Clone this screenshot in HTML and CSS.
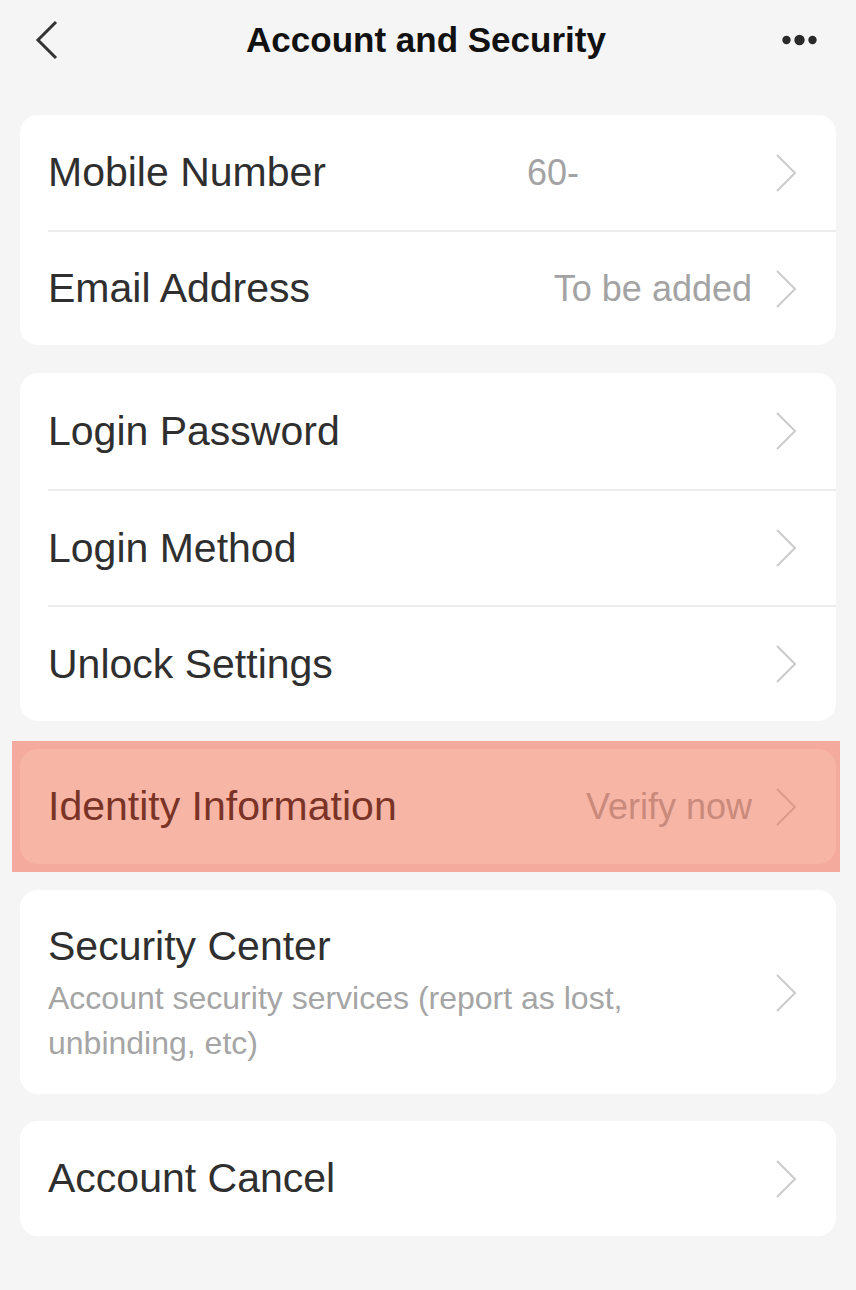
FILE: index.html
```html
<!DOCTYPE html>
<html lang="en">
<head>
<meta charset="utf-8">
<title>Account and Security</title>
<link rel="stylesheet" href="styles.css">
</head>
<body>
<header class="topbar">
  <div class="topbar-left">
    <svg class="back" width="26" height="40" viewBox="0 0 26 40"><polyline points="22,2 4,20 22,38" fill="none" stroke="#333" stroke-width="3" stroke-linejoin="miter"/></svg>
  </div>
  <h1 class="title">Account and Security</h1>
  <div class="topbar-right">
    <svg class="more" width="36" height="14" viewBox="0 0 36 14"><circle cx="4.5" cy="7" r="4.2" fill="#2a2a2a"/><circle cx="17.5" cy="7" r="5.2" fill="#2a2a2a"/><circle cx="30.5" cy="7" r="4.2" fill="#2a2a2a"/></svg>
  </div>
</header>

<main class="content">
  <section class="card">
    <div class="row">
      <span class="label">Mobile Number</span>
      <span class="value value-phone">60-</span>
      <svg class="chev" width="24" height="40" viewBox="0 0 24 40"><polyline points="3,2 21,20 3,38" fill="none" stroke="#cbcbcb" stroke-width="2"/></svg>
    </div>
    <div class="row">
      <span class="label">Email Address</span>
      <span class="value">To be added</span>
      <svg class="chev" width="24" height="40" viewBox="0 0 24 40"><polyline points="3,2 21,20 3,38" fill="none" stroke="#cbcbcb" stroke-width="2"/></svg>
    </div>
  </section>

  <section class="card card-login">
    <div class="row">
      <span class="label">Login Password</span>
      <svg class="chev" width="24" height="40" viewBox="0 0 24 40"><polyline points="3,2 21,20 3,38" fill="none" stroke="#cbcbcb" stroke-width="2"/></svg>
    </div>
    <div class="row">
      <span class="label">Login Method</span>
      <svg class="chev" width="24" height="40" viewBox="0 0 24 40"><polyline points="3,2 21,20 3,38" fill="none" stroke="#cbcbcb" stroke-width="2"/></svg>
    </div>
    <div class="row">
      <span class="label">Unlock Settings</span>
      <svg class="chev" width="24" height="40" viewBox="0 0 24 40"><polyline points="3,2 21,20 3,38" fill="none" stroke="#cbcbcb" stroke-width="2"/></svg>
    </div>
  </section>

  <div class="highlight">
    <section class="card card-hl">
      <div class="row">
        <span class="label">Identity Information</span>
        <span class="value">Verify now</span>
        <svg class="chev" width="24" height="40" viewBox="0 0 24 40"><polyline points="3,2 21,20 3,38" fill="none" stroke="#dc998c" stroke-width="2"/></svg>
      </div>
    </section>
  </div>

  <section class="card card-sec">
    <div class="row row-tall">
      <div class="stack">
        <span class="label">Security Center</span>
        <span class="sub">Account security services (report as lost, unbinding, etc)</span>
      </div>
      <svg class="chev" width="24" height="40" viewBox="0 0 24 40"><polyline points="3,2 21,20 3,38" fill="none" stroke="#cbcbcb" stroke-width="2"/></svg>
    </div>
  </section>

  <section class="card card-last">
    <div class="row">
      <span class="label">Account Cancel</span>
      <svg class="chev" width="24" height="40" viewBox="0 0 24 40"><polyline points="3,2 21,20 3,38" fill="none" stroke="#cbcbcb" stroke-width="2"/></svg>
    </div>
  </section>
</main>
</body>
</html>
```

FILE: styles.css
```css
* { box-sizing: border-box; }

html, body {
  margin: 0;
  padding: 0;
  background: #f5f5f5;
  font-family: "Liberation Sans", Arial, sans-serif;
  color: #2f2f2f;
}

.topbar {
  height: 80px;
  display: grid;
  grid-template-columns: 1fr auto 1fr;
  align-items: center;
  padding: 0 38px 0 34px;
}

.topbar-left { display: flex; align-items: center; }
.topbar-right { display: flex; justify-content: flex-end; align-items: center; }

.title {
  margin: 0;
  font-size: 35px;
  font-weight: 700;
  color: #111;
}

.content {
  padding: 35px 20px 40px;
  display: flex;
  flex-direction: column;
}

.card {
  background: #fff;
  border-radius: 18px;
  overflow: hidden;
  margin-bottom: 28px;
}

.row {
  height: 115px;
  margin-left: 28px;
  padding-right: 38px;
  display: flex;
  align-items: center;
}

.card-login .row { height: 116px; }

.row + .row {
  border-top: 2px solid #ececec;
}

.label {
  font-size: 41px;
  color: #2f2f2f;
  flex: 1;
  white-space: nowrap;
}

.value {
  font-size: 36px;
  color: #a3a3a3;
  margin-right: 22px;
  white-space: nowrap;
}

.value-phone {
  width: 225px;
  text-align: left;
}

.chev { flex: none; display: block; }

.highlight {
  margin: -8px -4px 18px -8px;
  padding: 8px 4px 8px 8px;
  background: #f4ab9d;
}

.card-hl {
  background: #f7b5a6;
  margin-bottom: 0;
}

.card-hl .label { color: #7a3327; }
.card-hl .value { color: #c98a7c; }

.row-tall {
  height: auto;
  padding-top: 30px;
  padding-bottom: 28px;
}

.stack {
  flex: 1;
  display: flex;
  flex-direction: column;
}

.stack .label {
  line-height: 52px;
}

.sub {
  margin-top: 4px;
  font-size: 32px;
  line-height: 45px;
  color: #a5a5a5;
  max-width: 680px;
}

.card-last { margin-bottom: 0; margin-top: -1px; }
```
